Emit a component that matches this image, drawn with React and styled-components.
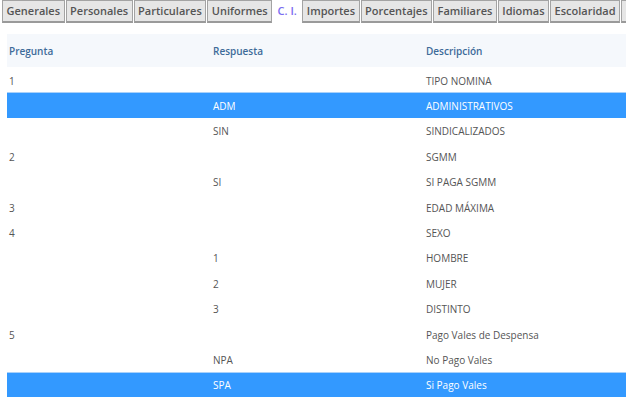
import React from 'react'
import styled, { createGlobalStyle } from 'styled-components'

const GlobalStyle = createGlobalStyle`
  html, body { margin: 0; padding: 0; background: #fff; }
  body { font-family: "Open Sans", "Noto Sans", sans-serif; overflow: hidden; }
`

const tabs = ['Generales', 'Personales', 'Particulares', 'Uniformes', 'C. I.', 'Importes', 'Porcentajes', 'Familiares', 'Idiomas', 'Escolaridad']

const rows = [
  { q: '1', r: '', d: 'TIPO NOMINA' },
  { q: '', r: 'ADM', d: 'ADMINISTRATIVOS', sel: true },
  { q: '', r: 'SIN', d: 'SINDICALIZADOS' },
  { q: '2', r: '', d: 'SGMM' },
  { q: '', r: 'SI', d: 'SI PAGA SGMM' },
  { q: '3', r: '', d: 'EDAD MÁXIMA' },
  { q: '4', r: '', d: 'SEXO' },
  { q: '', r: '1', d: 'HOMBRE' },
  { q: '', r: '2', d: 'MUJER' },
  { q: '', r: '3', d: 'DISTINTO' },
  { q: '5', r: '', d: 'Pago Vales de Despensa' },
  { q: '', r: 'NPA', d: 'No Pago Vales' },
  { q: '', r: 'SPA', d: 'Si Pago Vales', sel: true },
]

export default function App() {
  return (
    <Page>
      <GlobalStyle />
      <TabBar>
        {tabs.map(t => (
          <Tab key={t} $active={t === 'C. I.'}>{t}</Tab>
        ))}
        <Tab aria-hidden="true" />
      </TabBar>
      <Table>
        <HeadRow>
          <Cell $head>Pregunta</Cell>
          <Cell $head>Respuesta</Cell>
          <Cell $head>Descripción</Cell>
        </HeadRow>
        {rows.map((row, i) => (
          <Row key={i} $sel={row.sel}>
            <Cell>{row.q}</Cell>
            <Cell>{row.r}</Cell>
            <Cell>{row.d}</Cell>
          </Row>
        ))}
      </Table>
    </Page>
  )
}

const Page = styled.div`
  width: 626px;
  height: 398px;
  overflow: hidden;
`

const TabBar = styled.div`
  display: flex;
  padding-left: 2px;
  height: 25px;
  white-space: nowrap;
`

const Tab = styled.div`
  flex: none;
  min-width: 20px;
  height: ${p => (p.$active ? '25px' : '23px')};
  box-sizing: border-box;
  padding: 0 3.5px;
  margin-right: 1px;
  line-height: 20px;
  font-size: 11px;
  font-weight: 600;
  color: ${p => (p.$active ? '#7a6cf0' : '#555')};
  background: ${p => (p.$active ? '#fff' : '#e6e6e6')};
  border: 1px solid ${p => (p.$active ? 'transparent' : '#a3a3a3')};
  border-bottom: ${p => (p.$active ? 'none' : '2px solid #9a9a9a')};
`

const Table = styled.div`
  margin: 9px 0 0 7px;
`

const gridCols = `
  display: grid;
  grid-template-columns: 204px 213px 1fr;
`

const HeadRow = styled.div`
  ${gridCols}
  height: 33px;
  align-items: center;
  background: #f5f8fc;
`

const Row = styled.div`
  ${gridCols}
  height: 25.4px;
  align-items: center;
  box-sizing: border-box;
  padding-top: 1px;
  color: ${p => (p.$sel ? '#fff' : '#555')};
  background: ${p => (p.$sel ? '#3399ff' : '#fff')};
  border-top: 1px solid ${p => (p.$sel ? '#a9d1fa' : 'transparent')};
`

const Cell = styled.div`
  padding-left: 2px;
  font-size: 10px;
  font-weight: ${p => (p.$head ? 600 : 400)};
  color: ${p => (p.$head ? '#3d6b99' : 'inherit')};
  white-space: nowrap;
`
